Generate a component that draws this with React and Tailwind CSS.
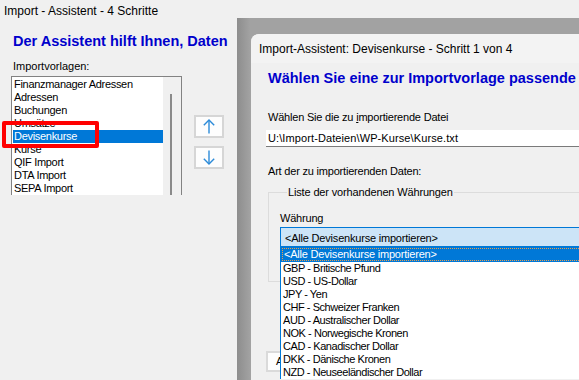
import React from "react";

const templates = [
  "Finanzmanager Adressen",
  "Adressen",
  "Buchungen",
  "Umsätze",
  "Devisenkurse",
  "Kurse",
  "QIF Import",
  "DTA Import",
  "SEPA Import",
];

const currencies = [
  "GBP - Britische Pfund",
  "USD - US-Dollar",
  "JPY - Yen",
  "CHF - Schweizer Franken",
  "AUD - Australischer Dollar",
  "NOK - Norwegische Kronen",
  "CAD - Kanadischer Dollar",
  "DKK - Dänische Kronen",
  "NZD - Neuseeländischer Dollar",
];

function ArrowButton({ dir }) {
  return (
    <div className="flex h-[23px] w-[30px] items-center justify-center border-2 border-[#d6d6d6] bg-[#fdfdfd]">
      <svg width="12" height="15" viewBox="0 0 12 15" fill="none" stroke="#2b8ad8" strokeWidth="1.4">
        {dir === "up" ? (
          <>
            <path d="M6 1.2V14.5" />
            <path d="M0.8 6.2L6 1L11.2 6.2" />
          </>
        ) : (
          <>
            <path d="M6 0.5V13.8" />
            <path d="M0.8 8.8L6 14L11.2 8.8" />
          </>
        )}
      </svg>
    </div>
  );
}

export default function App() {
  return (
    <div className="relative h-[380px] w-[579px] overflow-hidden bg-[#f0f0f0] font-['Liberation_Sans',Arial,sans-serif] text-[11px] text-black">
      {/* Left window */}
      <div className="pl-[4px] pt-[4px] text-[12px] leading-[14px]">Import - Assistent - 4 Schritte</div>
      <div className="mt-[15px] pl-[13px] text-[14.5px] font-bold leading-[17px] text-[#0000cc] whitespace-nowrap">
        Der Assistent hilft Ihnen, Daten
      </div>
      <div className="mt-[10px] pl-[13px] leading-[13px]">Importvorlagen:</div>
      <div className="mt-[3px] flex pl-[11px]">
        <div className="flex h-[119px] w-[171px] border-l border-r border-t border-[#828282]">
          <div className="w-[151px] bg-white pl-[1px] pt-px">
            {templates.map((t, i) => (
              <div
                key={t}
                className={
                  "h-[13px] pl-[1px] leading-[13px] tracking-[-0.3px] whitespace-nowrap " +
                  (i === 4 ? "bg-[#0078d7] text-white" : "")
                }
              >
                {t}
              </div>
            ))}
          </div>
          <div className="flex-1 bg-[#f0f0f0] pl-[7px] pt-[17px]">
            <div className="h-full w-[2px] bg-[#8a8a8a]" />
          </div>
        </div>
        <div className="ml-[12px] mt-[39px] flex flex-col gap-[8px]">
          <ArrowButton dir="up" />
          <ArrowButton dir="down" />
        </div>
      </div>

      {/* Red annotation */}
      <div className="absolute left-[2px] top-[121px] h-[27px] w-[97px] rounded-[2px] border-[4px] border-[#ff0000]" />

      {/* Second dialog with its shadow frame */}
      <div className="absolute left-[237px] top-[18px] h-[380px] w-[360px] bg-[linear-gradient(to_right,#8d8d8d_0px,#a2a2a2_13px)] pl-[14px] pt-[16px]">
        <div className="relative h-full overflow-hidden rounded-tl-[8px] bg-[#f0f0f0]">
          <div className="h-[29px] bg-[#f3f3f3] pl-[8px] pt-[8px] text-[12px] leading-[14px] whitespace-nowrap">
            Import-Assistent: Devisenkurse - Schritt 1 von 4
          </div>
          <div className="mt-[7px] pl-[17px] text-[14.5px] font-bold leading-[17px] text-[#0000cc] whitespace-nowrap">
            Wählen Sie eine zur Importvorlage passende
          </div>
          <div className="mt-[24px] pl-[17px] leading-[13px] tracking-[-0.2px] whitespace-nowrap">
            Wählen Sie die zu <span className="underline">i</span>mportierende Datei
          </div>
          <div className="ml-[15px] mt-[6px] h-[17px] border-b border-[#7a7a7a] bg-white pl-[2px] leading-[16px] tracking-[0.1px] whitespace-nowrap">
            U:\Import-Dateien\WP-Kurse\Kurse.txt
          </div>
          <div className="mt-[18px] pl-[17px] leading-[13px] tracking-[-0.2px] whitespace-nowrap">
            Art der zu importierenden Daten:
          </div>
          <fieldset className="ml-[17px] mt-[8px] border border-[#dcdcdc] pb-[34px] pl-[11px] pt-[13px]">
            <legend className="ml-[7px] px-[1px] leading-[13px] tracking-[-0.15px] whitespace-nowrap">
              Liste der vorhandenen Währungen
            </legend>
            <div className="leading-[13px] tracking-[-0.2px]">Währung</div>
            <div className="mt-[2px] h-[20px] border border-[#0078d7] bg-[#cce4f7] pl-[4px] pt-[3px] leading-[15px] tracking-[-0.2px] whitespace-nowrap">
              &lt;Alle Devisenkurse importieren&gt;
            </div>
          </fieldset>
          <div className="ml-[15px] mt-[69px] flex h-[21px] w-[80px] items-center border-2 border-[#dadada] bg-[#fdfdfd] pl-[8px] leading-[13px]">
            A
          </div>

          {/* Open dropdown list */}
          <div className="absolute left-[29px] top-[213px] w-[320px] border-l border-[#0078d7] bg-white">
            <div className="h-[15px] bg-[#0078d7] p-px">
              <div className="h-[13px] border border-dotted border-[#e8a050] pl-[1px] leading-[11px] tracking-[-0.2px] text-white whitespace-nowrap">
                &lt;Alle Devisenkurse importieren&gt;
              </div>
            </div>
            {currencies.map((c) => (
              <div key={c} className="h-[13px] pl-[2px] leading-[13px] tracking-[-0.45px] whitespace-nowrap">
                {c}
              </div>
            ))}
          </div>
        </div>
      </div>
    </div>
  );
}
